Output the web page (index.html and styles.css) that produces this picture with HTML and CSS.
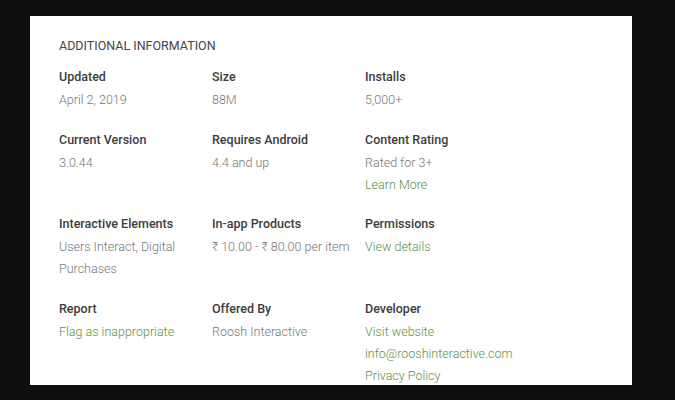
FILE: index.html
```html
<!DOCTYPE html>
<html lang="en">
<head>
  <meta charset="UTF-8" />
  <title>Additional Information</title>
  <link rel="stylesheet" href="styles.css">
</head>
<body>
  <section class="card">
    <h2>Additional Information</h2>
    <div class="details">
      <div class="item">
        <div class="label">Updated</div>
        <div class="value">April 2, 2019</div>
      </div>
      <div class="item">
        <div class="label">Size</div>
        <div class="value">88M</div>
      </div>
      <div class="item">
        <div class="label">Installs</div>
        <div class="value">5,000+</div>
      </div>

      <div class="item">
        <div class="label">Current Version</div>
        <div class="value">3.0.44</div>
      </div>
      <div class="item">
        <div class="label">Requires Android</div>
        <div class="value">4.4 and up</div>
      </div>
      <div class="item">
        <div class="label">Content Rating</div>
        <div class="value">Rated for 3+</div>
        <a class="value link" href="#">Learn More</a>
      </div>

      <div class="item">
        <div class="label">Interactive Elements</div>
        <div class="value">Users Interact, Digital Purchases</div>
      </div>
      <div class="item">
        <div class="label">In-app Products</div>
        <div class="value nowrap">₹ 10.00 - ₹ 80.00 per item</div>
      </div>
      <div class="item">
        <div class="label">Permissions</div>
        <a class="value link" href="#">View details</a>
      </div>

      <div class="item">
        <div class="label">Report</div>
        <a class="value link" href="#">Flag as inappropriate</a>
      </div>
      <div class="item">
        <div class="label">Offered By</div>
        <div class="value">Roosh Interactive</div>
      </div>
      <div class="item">
        <div class="label">Developer</div>
        <a class="value link" href="#">Visit website</a>
        <a class="value link" href="#">info@rooshinteractive.com</a>
        <a class="value link" href="#">Privacy Policy</a>
      </div>
    </div>
  </section>
</body>
</html>
```

FILE: styles.css
```css
* {
  box-sizing: border-box;
  margin: 0;
  padding: 0;
}
body {
  background-color: #0f0f0f;
  font-family: Roboto, "Noto Sans", sans-serif;
  padding: 16px 43px 15px 30px;
  height: 400px;
  overflow: hidden;
}
.card {
  background-color: #fff;
  width: 602px;
  height: 369px;
  padding: 22px 29px 0 29px;
  overflow: hidden;
}
.card h2 {
  font-size: 12.5px;
  font-weight: 400;
  text-transform: uppercase;
  color: #444;
  line-height: 16px;
  margin-bottom: 12px;
}
.details {
  display: grid;
  grid-template-columns: 153px 153px 153px;
  row-gap: 17.5px;
}
.item {
  display: flex;
  flex-direction: column;
}
.label {
  font-size: 12.5px;
  font-weight: 500;
  color: #3c3c3c;
  line-height: 22px;
  margin-bottom: 1px;
}
.value {
  font-size: 12.5px;
  font-weight: 300;
  color: #777;
  line-height: 22px;
  text-decoration: none;
  padding-right: 10px;
}
.value.nowrap {
  white-space: nowrap;
  padding-right: 0;
}
.value.link {
  color: #5e9141;
}
```
